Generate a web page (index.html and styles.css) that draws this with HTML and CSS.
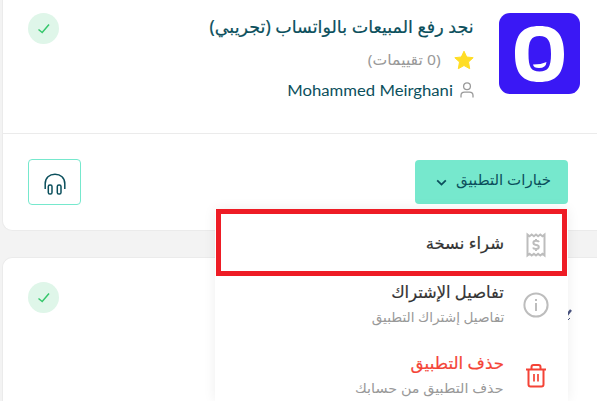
FILE: index.html
```html
<!DOCTYPE html>
<html lang="ar" dir="rtl">
<head>
<meta charset="utf-8">
<title>التطبيقات</title>
<link rel="stylesheet" href="styles.css">
</head>
<body>
<main class="apps">
  <article class="card">
    <header class="card-head">
      <svg class="logo" viewBox="0 0 81 81"><rect width="81" height="81" rx="11" fill="#3a18f5"/><path fill="#fff" fill-rule="evenodd" d="M40.500 13C57 13 65 21 65 41S57 69 40.500 69S16 61 16 41S24 13 40.500 13ZM40.500 23C32 23 29.500 28 29.500 41S32 58.500 40.500 58.500S52 54 52 41S49 23 40.500 23Z"/><path fill="#fff" d="M34 51.500Q42 51.500 47.500 49Q47 55 40 55Q34.500 55 34 51.500Z"/></svg>
      <div class="info">
        <h2 class="title"><span class="fit fit-title">نجد رفع المبيعات بالواتساب (تجريبي)</span></h2>
        <div class="rating">
          <svg width="20" height="20" viewBox="0 0 20 20"><path fill="#ffdd25" stroke="#ffdd25" stroke-linejoin="round" d="M10 1.200L12.700 7L19.200 7.700L14.500 12L15.700 18.700L10 15.500L4.300 18.700L5.500 12L.8 7.700L7.300 7Z"/></svg>
          <span class="fit fit-rating">(0 تقييمات)</span>
        </div>
        <div class="author">
          <svg width="14" height="16" viewBox="0 0 14 16" fill="none" stroke="#9a9a9a" stroke-width="1.300"><circle cx="7" cy="4.200" r="3.400"/><path d="M1 15.500V13.500Q1 10.200 4.500 10.200H9.500Q13 10.200 13 13.500V15.500"/></svg>
          <span class="fit fit-author" dir="ltr">Mohammed Meirghani</span>
        </div>
      </div>
      <span class="status"><svg width="14" height="12" viewBox="0 0 14 12"><path d="M1.500 6.500L5.200 9.500L12 1.500"/></svg></span>
    </header>
    <footer class="card-foot">
      <button class="options"><span class="fit fit-options">خيارات التطبيق</span><svg width="11" height="8" viewBox="0 0 11 8"><path d="M1.200 1.300L5.500 5.600L9.800 1.300"/></svg></button>
      <button class="support"><svg width="22" height="22" viewBox="0 0 22 22" fill="none" stroke="#0b4f5c" stroke-width="1.500"><path d="M1.200 16V10.800C1.200 4.800 5.400 1.200 11 1.200S20.800 4.800 20.800 10.800V16"/><rect x="4.300" y="12" width="3.700" height="9" rx="1.600"/><rect x="13.300" y="12" width="3.700" height="9" rx="1.600"/></svg></button>
    </footer>
  </article>
  <article class="card next">
    <header class="card-head next-head">
      <svg class="peek" width="5" height="14" viewBox="0 0 5 14" fill="none" stroke="#4a5480"><path stroke-width="2.400" d="M0 6L4 1"/><path d="M0 12L3 9"/></svg>
      <span class="status"><svg width="14" height="12" viewBox="0 0 14 12"><path d="M1.500 6.500L5.200 9.500L12 1.500"/></svg></span>
    </header>
  </article>
</main>
<nav class="menu">
  <a class="item buy">
    <svg width="26" height="26" viewBox="0 0 26 26" fill="none" stroke="#bdbdbd"><path stroke-width="2" d="M4.500 2.500V23.500L6.600 21.800L8.700 23.500L10.900 21.800L13 23.500L15.100 21.800L17.300 23.500L19.400 21.800L21.500 23.500V2.500L19.400 4.200L17.300 2.500L15.100 4.200L13 2.500L10.900 4.200L8.700 2.500L6.600 4.200Z"/><path stroke-width="2" d="M16 10Q15.500 8.800 13 8.800Q10.400 8.800 10.400 10.800Q10.400 12.700 13 12.900Q15.800 13.100 15.800 15Q15.800 17 13 17Q10.500 17 10 15.500M13 7V9M13 17V19"/></svg>
    <span class="label"><b class="name"><span class="fit fit-buy">شراء نسخة</span></b></span>
  </a>
  <a class="item details">
    <svg width="26" height="26" viewBox="0 0 26 26" fill="none" stroke="#bdbdbd" stroke-width="2"><circle cx="13" cy="13" r="11.600"/><path d="M13 11V19M13 7V9"/></svg>
    <span class="label"><b class="name"><span class="fit fit-details">تفاصيل الإشتراك</span></b><small class="note"><span class="fit fit-details-note">تفاصيل إشتراك التطبيق</span></small></span>
  </a>
  <a class="item delete">
    <svg width="26" height="26" viewBox="0 0 26 26" fill="none" stroke="#f44336" stroke-width="2"><path d="M3 6.500H23M8.500 6V4Q8.500 2 10.500 2H15.500Q17.500 2 17.500 4V6M5.500 6.500V21.500Q5.500 23.500 7.500 23.500H18.500Q20.500 23.500 20.500 21.500V6.500"/><path stroke-width="1.700" d="M11 11V18.500M15 11V18.500"/></svg>
    <span class="label"><b class="name"><span class="fit fit-delete">حذف التطبيق</span></b><small class="note"><span class="fit fit-delete-note">حذف التطبيق من حسابك</span></small></span>
  </a>
</nav>
</body>
</html>
```
FILE: styles.css
```css
* { box-sizing: border-box; }
body { margin: 0; width: 597px; height: 401px; overflow: hidden; position: relative; background: #f3f3f3; font-family: "Noto Sans", "DejaVu Sans", sans-serif; color: #0b4f5c; }
svg { display: block; flex: none; }
.apps { display: flex; flex-direction: column; gap: 26px; padding-left: 2px; }
.card { background: #fff; border: 1px solid #ebebeb; border-right: 0; border-radius: 0 0 0 10px; height: 231px; }
.card:first-child { border-top: 0; }
.card.next { height: 144px; border-radius: 10px 0 0 0; border-bottom: 0; }
.card-head { height: 134px; display: flex; align-items: flex-start; padding: 13px 17px 0 25px; border-bottom: 1px solid #ebebeb; }
.next-head { padding: 24px 25px 0; border-bottom: 0; }
.logo { width: 81px; height: 81px; }
.info { flex: 1; margin-right: 25px; }
.title { margin: 0; height: 31px; line-height: 27px; font-size: 17.500px; font-weight: 400; -webkit-text-stroke: .2px; }
.rating { height: 31px; display: flex; align-items: center; gap: 13px; font-size: 15px; color: #999; }
.rating .fit { margin-top: -2px; }
.author { height: 31px; display: flex; align-items: center; gap: 7px; font-size: 15.500px; line-height: 18px; font-family: Lato, sans-serif; }
.author svg { margin-top: -1px; }
.author .fit { margin-top: -2px; }
.fit { display: inline-block; white-space: nowrap; transform-origin: right center; }
.fit-title { transform: scaleX(1.002); }
.fit-rating { transform: scaleX(1.045); }
.fit-author { transform: scaleX(1.076); }
.status { width: 31px; height: 31px; border-radius: 50%; background: #dff6e9; display: grid; place-items: center; flex: none; }
.next-head .status { margin-right: auto; }
.status path { fill: none; stroke: #36c76c; stroke-width: 1.500; }
.peek { margin-top: 27px; }
.card-foot { display: flex; justify-content: space-between; padding: 25px 29px 0 25px; }
button { font: inherit; color: inherit; padding: 0; }
.options { width: 153px; height: 44px; margin-top: 1px; border: 0; border-radius: 4px; background: #76e8cd; display: flex; align-items: center; justify-content: space-between; padding: 0 17px 7px 21px; font-size: 15px; }
.options svg { margin-top: 9px; }
.options path { fill: none; stroke: #0b4f5c; stroke-width: 1.800; }
.support { width: 53px; height: 46px; border: 1px solid #76e8cd; border-radius: 4px; background: #fff; display: grid; place-items: center; padding-top: 4px; }
.menu { position: absolute; left: 215px; top: 209px; width: 353px; height: 192px; background: #fff; box-shadow: 0 0 12px rgba(0,0,0,.07); }
.item { display: flex; align-items: center; gap: 19px; padding-right: 19px; }
.buy { width: 351px; height: 67px; margin-right: 1px; border: 5px solid #ee1c25; padding: 5px 13px 0 0; }
.buy .label { margin-top: -5px; }
.details { height: 58px; }
.delete { height: 67px; padding-top: 16px; }
.label { display: flex; flex-direction: column; }
.details .label { margin-top: -2px; }
.delete .label { margin-top: -2px; }
.name { font-size: 16.500px; line-height: 26px; font-weight: 400; color: #333; -webkit-text-stroke: .2px; }
.note { font-size: 13.500px; line-height: 24px; color: #999; }
.delete .name { color: #f44336; }
.fit-delete { transform: scaleX(1.015); }
.fit-details { transform: scaleX(.99); }
.fit-details-note { transform: scaleX(1.01); }
.fit-delete-note { transform: scaleX(1.065); }
```
